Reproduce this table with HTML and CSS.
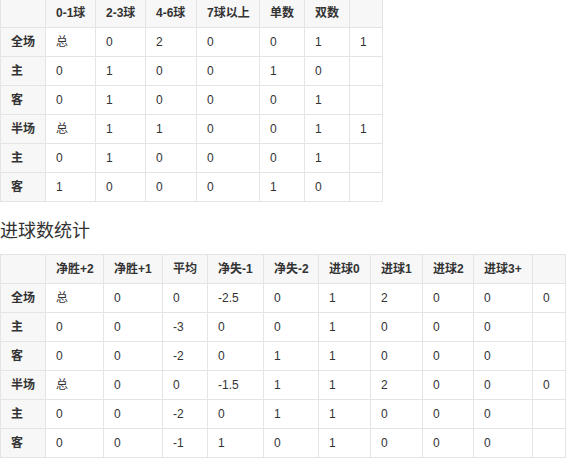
FILE: index.html
```html
<!DOCTYPE html>
<html lang="zh-CN">
<head>
<meta charset="utf-8">
<title>进球数统计</title>
<link rel="stylesheet" href="styles.css">
</head>
<body>
<table class="stat t1">
  <colgroup>
    <col class="c45"><col class="c50"><col class="c50"><col class="c51"><col class="c63"><col class="c45"><col class="c45"><col class="c33">
  </colgroup>
  <thead>
    <tr><th></th><th>0-1球</th><th>2-3球</th><th>4-6球</th><th>7球以上</th><th>单数</th><th>双数</th><th></th></tr>
  </thead>
  <tbody>
    <tr><th>全场</th><td>总</td><td>0</td><td>2</td><td>0</td><td>0</td><td>1</td><td>1</td></tr>
    <tr><th>主</th><td>0</td><td>1</td><td>0</td><td>0</td><td>1</td><td>0</td><td></td></tr>
    <tr><th>客</th><td>0</td><td>1</td><td>0</td><td>0</td><td>0</td><td>1</td><td></td></tr>
    <tr><th>半场</th><td>总</td><td>1</td><td>1</td><td>0</td><td>0</td><td>1</td><td>1</td></tr>
    <tr><th>主</th><td>0</td><td>1</td><td>0</td><td>0</td><td>0</td><td>1</td><td></td></tr>
    <tr><th>客</th><td>1</td><td>0</td><td>0</td><td>0</td><td>1</td><td>0</td><td></td></tr>
  </tbody>
</table>
<h3 class="title">进球数统计</h3>
<table class="stat t2">
  <colgroup>
    <col class="c45"><col class="c58"><col class="c59"><col class="c45"><col class="c56"><col class="c55"><col class="c52"><col class="c52"><col class="c51"><col class="c59"><col class="c33">
  </colgroup>
  <thead>
    <tr><th></th><th>净胜+2</th><th>净胜+1</th><th>平均</th><th>净失-1</th><th>净失-2</th><th>进球0</th><th>进球1</th><th>进球2</th><th>进球3+</th><th></th></tr>
  </thead>
  <tbody>
    <tr><th>全场</th><td>总</td><td>0</td><td>0</td><td>-2.5</td><td>0</td><td>1</td><td>2</td><td>0</td><td>0</td><td>0</td></tr>
    <tr><th>主</th><td>0</td><td>0</td><td>-3</td><td>0</td><td>0</td><td>1</td><td>0</td><td>0</td><td>0</td><td></td></tr>
    <tr><th>客</th><td>0</td><td>0</td><td>-2</td><td>0</td><td>1</td><td>1</td><td>0</td><td>0</td><td>0</td><td></td></tr>
    <tr><th>半场</th><td>总</td><td>0</td><td>0</td><td>-1.5</td><td>1</td><td>1</td><td>2</td><td>0</td><td>0</td><td>0</td></tr>
    <tr><th>主</th><td>0</td><td>0</td><td>-2</td><td>0</td><td>1</td><td>1</td><td>0</td><td>0</td><td>0</td><td></td></tr>
    <tr><th>客</th><td>0</td><td>0</td><td>-1</td><td>1</td><td>0</td><td>1</td><td>0</td><td>0</td><td>0</td><td></td></tr>
  </tbody>
</table>
</body>
</html>
```
FILE: styles.css
```css
html, body {
  margin: 0;
  padding: 0;
  background: #fff;
}
body {
  font-family: "Liberation Sans", "Noto Sans CJK SC", sans-serif;
  font-size: 12px;
  color: #333;
}
.stat {
  border-collapse: collapse;
  table-layout: fixed;
}
.t1 {
  width: 383px;
  margin-top: -2px;
}
.t2 {
  width: 566px;
}
.stat th,
.stat td {
  border: 1px solid #e4e4e4;
  padding: 5px 10px;
  height: 18px;
  line-height: 14px;
  text-align: left;
  white-space: nowrap;
  vertical-align: middle;
}
.stat th {
  font-weight: bold;
  background: #f7f7f7;
}
.stat td {
  font-weight: normal;
  background: #fff;
}
.c33 { width: 33px; }
.c45 { width: 45px; }
.c50 { width: 50px; }
.c51 { width: 51px; }
.c52 { width: 52px; }
.c55 { width: 55px; }
.c56 { width: 56px; }
.c58 { width: 58px; }
.c59 { width: 59px; }
.c63 { width: 63px; }
.title {
  margin: 19px 0 13px;
  font-size: 18px;
  font-weight: normal;
  line-height: 20px;
  color: #333;
}
```
